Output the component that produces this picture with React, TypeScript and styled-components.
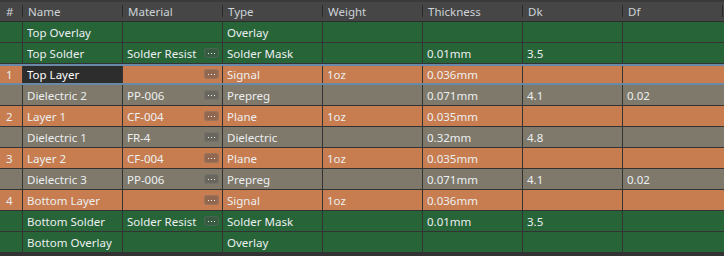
import React from "react";
import styled, { createGlobalStyle, css } from "styled-components";

type Kind = "overlay" | "mask" | "signal" | "plane" | "dielectric";

interface Layer {
  num?: string;
  name: string;
  material?: string;
  picker?: boolean;
  type: string;
  weight?: string;
  thickness?: string;
  dk?: string;
  df?: string;
  kind: Kind;
  selected?: boolean;
}

const layers: Layer[] = [
  { name: "Top Overlay", type: "Overlay", kind: "overlay" },
  { name: "Top Solder", material: "Solder Resist", picker: true, type: "Solder Mask", thickness: "0.01mm", dk: "3.5", kind: "mask" },
  { num: "1", name: "Top Layer", picker: true, type: "Signal", weight: "1oz", thickness: "0.036mm", kind: "signal", selected: true },
  { name: "Dielectric 2", material: "PP-006", picker: true, type: "Prepreg", thickness: "0.071mm", dk: "4.1", df: "0.02", kind: "dielectric" },
  { num: "2", name: "Layer 1", material: "CF-004", picker: true, type: "Plane", weight: "1oz", thickness: "0.035mm", kind: "plane" },
  { name: "Dielectric 1", material: "FR-4", picker: true, type: "Dielectric", thickness: "0.32mm", dk: "4.8", kind: "dielectric" },
  { num: "3", name: "Layer 2", material: "CF-004", picker: true, type: "Plane", weight: "1oz", thickness: "0.035mm", kind: "plane" },
  { name: "Dielectric 3", material: "PP-006", picker: true, type: "Prepreg", thickness: "0.071mm", dk: "4.1", df: "0.02", kind: "dielectric" },
  { num: "4", name: "Bottom Layer", picker: true, type: "Signal", weight: "1oz", thickness: "0.036mm", kind: "signal" },
  { name: "Bottom Solder", material: "Solder Resist", picker: true, type: "Solder Mask", thickness: "0.01mm", dk: "3.5", kind: "mask" },
  { name: "Bottom Overlay", type: "Overlay", kind: "overlay" },
];

const rowColors: Record<Kind, string> = {
  overlay: "#276438",
  mask: "#276438",
  signal: "#c77d4f",
  plane: "#c77d4f",
  dielectric: "#7e796b",
};

const GlobalStyle = createGlobalStyle`
  html, body {
    margin: 0;
    padding: 0;
    background: #333333;
  }
  body {
    font-family: "Noto Sans", "Open Sans", sans-serif;
    font-size: 11.5px;
  }
`;

const columns = "22px repeat(7, 100px) 2px";

const Grid = styled.div`
  width: 724px;
  height: 256px;
  background: #333333;
  overflow: hidden;
`;

const HeaderRow = styled.div`
  display: grid;
  grid-template-columns: ${columns};
  height: 22px;
  box-sizing: border-box;
  background: #464646;
  border-top: 2px solid #3a3a3a;
  border-bottom: 1px solid #2c2c2c;
`;

const HeaderCell = styled.div<{ $sep?: boolean }>`
  position: relative;
  display: flex;
  align-items: center;
  padding-left: 6px;
  color: #cdd3d8;
  white-space: nowrap;
  overflow: hidden;
  ${(p) =>
    p.$sep &&
    css`
      &::before {
        content: "";
        position: absolute;
        left: 0;
        top: 3px;
        width: 1px;
        height: 12px;
        background: #2a2a2a;
      }
    `}
`;

const Row = styled.div<{ $kind: Kind; $selected?: boolean }>`
  position: relative;
  display: grid;
  grid-template-columns: ${columns};
  height: 21px;
  box-sizing: border-box;
  background: ${(p) => rowColors[p.$kind]};
  border-bottom: 1px solid #333333;
  ${(p) =>
    p.$selected &&
    css`
      &::after {
        content: "";
        position: absolute;
        left: 0;
        right: 0;
        top: 0;
        bottom: -1px;
        border-top: 2px solid #6a88a8;
        border-bottom: 2px solid #6a88a8;
        pointer-events: none;
      }
    `}
`;

const Cell = styled.div<{ $sep?: boolean; $active?: boolean }>`
  display: flex;
  align-items: center;
  box-sizing: border-box;
  padding-left: ${(p) => (p.$sep ? "4px" : "6px")};
  padding-right: 2px;
  color: #eceff1;
  white-space: nowrap;
  overflow: hidden;
  border-left: ${(p) => (p.$sep ? "1px solid #333333" : "none")};
  ${(p) =>
    p.$active &&
    css`
      background: #2d2d2d;
      color: #ffffff;
    `}
`;

const CellText = styled.span`
  flex: 1;
  overflow: hidden;
`;

const Picker = styled.span`
  display: inline-flex;
  align-items: center;
  justify-content: center;
  width: 15px;
  height: 10px;
  border-radius: 3px;
  background: rgba(80, 80, 80, 0.45);
  box-shadow: inset 0 0 0 1px rgba(255, 255, 255, 0.08);
  margin-right: 1px;
`;

function Dots() {
  return (
    <svg width="7" height="1" viewBox="0 0 7 1">
      <rect x="0" y="0" width="1" height="1" fill="#ececec" />
      <rect x="3" y="0" width="1" height="1" fill="#ececec" />
      <rect x="6" y="0" width="1" height="1" fill="#ececec" />
    </svg>
  );
}

const headers = ["#", "Name", "Material", "Type", "Weight", "Thickness", "Dk", "Df", ""];

export default function App() {
  return (
    <>
      <GlobalStyle />
      <Grid>
        <HeaderRow>
          {headers.map((h, i) => (
            <HeaderCell key={i} $sep={i > 0}>
              {h}
            </HeaderCell>
          ))}
        </HeaderRow>
        {layers.map((l) => (
          <Row key={l.name} $kind={l.kind} $selected={l.selected}>
            <Cell>{l.num}</Cell>
            <Cell $sep $active={l.selected}>
              <CellText>{l.name}</CellText>
            </Cell>
            <Cell $sep>
              <CellText>{l.material}</CellText>
              {l.picker && (
                <Picker>
                  <Dots />
                </Picker>
              )}
            </Cell>
            <Cell $sep>{l.type}</Cell>
            <Cell $sep>{l.weight}</Cell>
            <Cell $sep>{l.thickness}</Cell>
            <Cell $sep>{l.dk}</Cell>
            <Cell $sep>{l.df}</Cell>
            <Cell />
          </Row>
        ))}
      </Grid>
    </>
  );
}
